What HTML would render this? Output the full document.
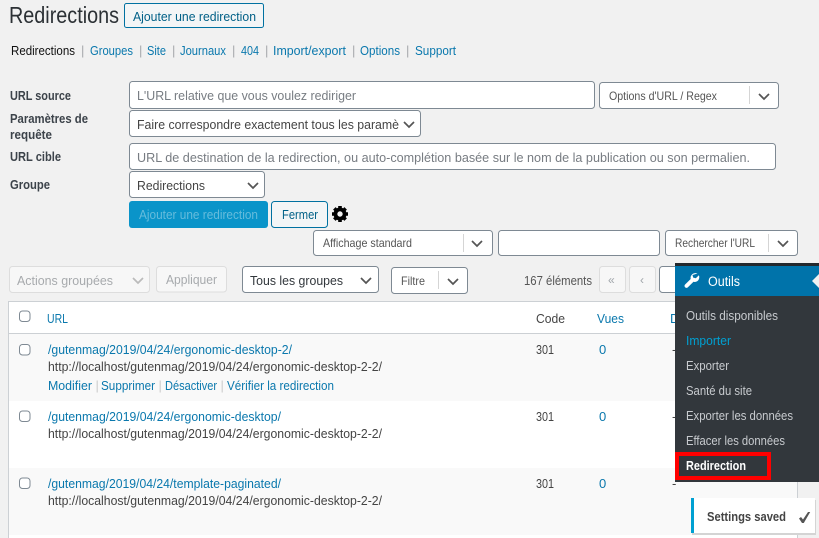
<!DOCTYPE html>
<html lang="fr"><head><meta charset="utf-8"><title>Redirections</title>
<style>
html,body{margin:0;padding:0;width:819px;height:538px;overflow:hidden;background:#f1f1f1}
svg{display:block}
text{font-family:"Liberation Sans",sans-serif;font-size:13px;fill:#444}
.l{fill:#0a78ad}
.b{font-weight:bold;font-size:12.5px;fill:#3c434a}
.p{fill:#777c82}
.s{fill:#555;font-size:12px}
.sep{fill:#a7aaad}
.m{fill:#c8cbcf;font-size:13px}
.f{fill:#fff;stroke:#7e8993}
.ch{fill:none;stroke:#555;stroke-width:1.7}
.cb{fill:#fff;stroke:#7e8993}
</style></head><body>
<svg width="819" height="538" viewBox="0 0 819 538" xmlns="http://www.w3.org/2000/svg">
<rect width="819" height="538" fill="#f1f1f1"/>

<text x="9" y="23" textLength="110" lengthAdjust="spacingAndGlyphs" style="font-size:23px;fill:#2c3135">Redirections</text>
<rect x="124.500" y="3.500" width="139" height="24" rx="2" fill="#f3f5f6" stroke="#0071a1"/>
<text x="133" y="21" textLength="123" lengthAdjust="spacingAndGlyphs" style="fill:#016087">Ajouter une redirection</text>

<text x="11" y="55" textLength="64" lengthAdjust="spacingAndGlyphs" style="fill:#111">Redirections</text>
<text x="81" y="55" class="sep">|</text>
<text x="90" y="55" textLength="43" lengthAdjust="spacingAndGlyphs" class="l">Groupes</text>
<text x="139" y="55" class="sep">|</text>
<text x="147" y="55" textLength="19" lengthAdjust="spacingAndGlyphs" class="l">Site</text>
<text x="172" y="55" class="sep">|</text>
<text x="180" y="55" textLength="46" lengthAdjust="spacingAndGlyphs" class="l">Journaux</text>
<text x="232" y="55" class="sep">|</text>
<text x="241" y="55" textLength="18" lengthAdjust="spacingAndGlyphs" class="l">404</text>
<text x="265" y="55" class="sep">|</text>
<text x="273" y="55" textLength="73" lengthAdjust="spacingAndGlyphs" class="l">Import/export</text>
<text x="352" y="55" class="sep">|</text>
<text x="360" y="55" textLength="40" lengthAdjust="spacingAndGlyphs" class="l">Options</text>
<text x="406" y="55" class="sep">|</text>
<text x="415" y="55" textLength="41" lengthAdjust="spacingAndGlyphs" class="l">Support</text>

<text x="10" y="100" textLength="61" lengthAdjust="spacingAndGlyphs" class="b">URL source</text>
<text x="10" y="123" textLength="78" lengthAdjust="spacingAndGlyphs" class="b">Paramètres de</text>
<text x="10" y="139" textLength="42" lengthAdjust="spacingAndGlyphs" class="b">requête</text>
<text x="10" y="161" textLength="51" lengthAdjust="spacingAndGlyphs" class="b">URL cible</text>
<text x="10" y="189" textLength="40" lengthAdjust="spacingAndGlyphs" class="b">Groupe</text>

<rect x="129.500" y="81.500" width="465" height="27" rx="3" class="f"/>
<text x="137" y="100" textLength="219" lengthAdjust="spacingAndGlyphs" class="p">L'URL relative que vous voulez rediriger</text>

<rect x="599.500" y="82.500" width="179" height="26" rx="3" class="f"/>
<text x="609" y="100" textLength="108" lengthAdjust="spacingAndGlyphs" class="s">Options d'URL / Regex</text>
<path d="M749.500 86v18" stroke="#d5d5d5"/>
<path d="M759 94l5 5 5-5" class="ch"/>

<rect x="129.500" y="110.500" width="291" height="26" rx="3" class="f"/>
<text x="137" y="129" textLength="262" lengthAdjust="spacingAndGlyphs">Faire correspondre exactement tous les paramè</text>
<path d="M404 122l5 5 5-5" class="ch"/>

<rect x="129.500" y="143.500" width="646" height="26" rx="3" class="f"/>
<text x="137" y="162" textLength="613" lengthAdjust="spacingAndGlyphs" class="p">URL de destination de la redirection, ou auto-complétion basée sur le nom de la publication ou son permalien.</text>

<rect x="129.500" y="171.500" width="135" height="26" rx="3" class="f"/>
<text x="137" y="190" textLength="68" lengthAdjust="spacingAndGlyphs">Redirections</text>
<path d="M248 183l5 5 5-5" class="ch"/>

<rect x="129" y="201" width="139" height="27" rx="3" fill="#0a94c9"/>
<text x="139" y="219" textLength="119" lengthAdjust="spacingAndGlyphs" style="fill:#66bcdc">Ajouter une redirection</text>
<rect x="271.500" y="201.500" width="56" height="26" rx="3" fill="#f3f5f6" stroke="#0071a1"/>
<text x="282" y="219" textLength="36" lengthAdjust="spacingAndGlyphs" style="fill:#016087">Fermer</text>
<g transform="translate(340 214)" fill="#000">
<circle r="4.600" fill="none" stroke="#000" stroke-width="3.800"/>
<path d="M-1.800-8h3.600v3h-3.600zM-1.800 5h3.600v3h-3.600zM-8-1.800h3v3.600h-3zM5-1.800h3v3.600h-3z"/>
<path d="M-1.800-8h3.600v3h-3.600zM-1.800 5h3.600v3h-3.600zM-8-1.800h3v3.600h-3zM5-1.800h3v3.600h-3z" transform="rotate(45)"/>
</g>

<rect x="313.500" y="230.500" width="179" height="25" rx="3" class="f"/>
<text x="323" y="247" textLength="89" lengthAdjust="spacingAndGlyphs" class="s">Affichage standard</text>
<path d="M463.500 234v18" stroke="#d5d5d5"/>
<path d="M472 241l5 5 5-5" class="ch"/>
<rect x="498.500" y="230.500" width="161" height="25" rx="3" class="f"/>
<rect x="665.500" y="230.500" width="132" height="25" rx="3" class="f"/>
<text x="675" y="247" textLength="80" lengthAdjust="spacingAndGlyphs" class="s">Rechercher l'URL</text>
<path d="M768.500 234v18" stroke="#d5d5d5"/>
<path d="M778 241l5 5 5-5" class="ch"/>

<rect x="9.500" y="266.500" width="140" height="26" rx="3" fill="#f7f7f7" stroke="#ddd"/>
<text x="17" y="285" textLength="96" lengthAdjust="spacingAndGlyphs" style="fill:#a7aaad">Actions groupées</text>
<path d="M133 278l5 5 5-5" class="ch" style="stroke:#bbb"/>
<rect x="156.500" y="266.500" width="70" height="25.500" rx="3" fill="#f7f7f7" stroke="#ddd"/>
<text x="166" y="284" textLength="51" lengthAdjust="spacingAndGlyphs" style="fill:#a7aaad">Appliquer</text>
<rect x="242.500" y="266.500" width="136" height="26" rx="3" class="f"/>
<text x="250" y="285" textLength="93" lengthAdjust="spacingAndGlyphs" style="fill:#32373c">Tous les groupes</text>
<path d="M361 278l5 5 5-5" class="ch"/>
<rect x="391.500" y="267.500" width="76" height="26" rx="3" class="f"/>
<text x="401" y="285" textLength="24" lengthAdjust="spacingAndGlyphs" class="s">Filtre</text>
<path d="M438.500 271v18" stroke="#d5d5d5"/>
<path d="M448 279l5 5 5-5" class="ch"/>

<text x="524" y="285" textLength="68" lengthAdjust="spacingAndGlyphs" style="fill:#555">167 éléments</text>
<rect x="599.500" y="266.500" width="26" height="26" rx="3" fill="#f7f7f7" stroke="#ddd"/>
<text x="608" y="284" style="fill:#a0a5aa;font-size:12px">«</text>
<rect x="629.500" y="266.500" width="26" height="26" rx="3" fill="#f7f7f7" stroke="#ddd"/>
<text x="640" y="284" style="fill:#a0a5aa;font-size:12px">‹</text>
<rect x="659.500" y="266.500" width="40" height="26" rx="3" class="f"/>

<!-- table -->
<rect x="8.500" y="301.500" width="789" height="245" fill="#fff" stroke="#ccd0d4"/>
<path d="M9 333.500h788" stroke="#ccd0d4"/>
<rect x="9" y="334" width="788" height="67" fill="#f9f9f9"/>
<rect x="9" y="468" width="788" height="67" fill="#f9f9f9"/>

<rect x="19.500" y="311" width="10.500" height="10.500" rx="3" class="cb"/>
<text x="47" y="323" textLength="21" lengthAdjust="spacingAndGlyphs" class="l">URL</text>
<text x="536" y="323" textLength="29" lengthAdjust="spacingAndGlyphs">Code</text>
<text x="597" y="323" textLength="27" lengthAdjust="spacingAndGlyphs" class="l">Vues</text>
<text x="670" y="323" class="l">D</text>

<rect x="19.500" y="344.500" width="10.500" height="10.500" rx="3" class="cb"/>
<text x="48" y="354" textLength="244" lengthAdjust="spacingAndGlyphs" class="l">/gutenmag/2019/04/24/ergonomic-desktop-2/</text>
<text x="48" y="371" textLength="334" lengthAdjust="spacingAndGlyphs">http://localhost/gutenmag/2019/04/24/ergonomic-desktop-2-2/</text>
<text x="48" y="390" textLength="44" lengthAdjust="spacingAndGlyphs" class="l">Modifier</text>
<text x="95.500" y="390" style="fill:#ccc">|</text>
<text x="101" y="390" textLength="54" lengthAdjust="spacingAndGlyphs" class="l">Supprimer</text>
<text x="158.500" y="390" style="fill:#ccc">|</text>
<text x="165" y="390" textLength="52" lengthAdjust="spacingAndGlyphs" class="l">Désactiver</text>
<text x="220.500" y="390" style="fill:#ccc">|</text>
<text x="227" y="390" textLength="107" lengthAdjust="spacingAndGlyphs" class="l">Vérifier la redirection</text>
<text x="536" y="354" textLength="18" lengthAdjust="spacingAndGlyphs">301</text>
<text x="599" y="354" class="l">0</text>
<text x="672" y="354">-</text>

<rect x="19.500" y="411" width="10.500" height="10.500" rx="3" class="cb"/>
<text x="48" y="421" textLength="233" lengthAdjust="spacingAndGlyphs" class="l">/gutenmag/2019/04/24/ergonomic-desktop/</text>
<text x="48" y="438" textLength="334" lengthAdjust="spacingAndGlyphs">http://localhost/gutenmag/2019/04/24/ergonomic-desktop-2-2/</text>
<text x="536" y="421" textLength="18" lengthAdjust="spacingAndGlyphs">301</text>
<text x="599" y="421" class="l">0</text>
<text x="672" y="421">-</text>

<rect x="19.500" y="478" width="10.500" height="10.500" rx="3" class="cb"/>
<text x="48" y="488" textLength="233" lengthAdjust="spacingAndGlyphs" class="l">/gutenmag/2019/04/24/template-paginated/</text>
<text x="48" y="505" textLength="334" lengthAdjust="spacingAndGlyphs">http://localhost/gutenmag/2019/04/24/ergonomic-desktop-2-2/</text>
<text x="536" y="488" textLength="18" lengthAdjust="spacingAndGlyphs">301</text>
<text x="599" y="488" class="l">0</text>
<text x="672" y="488">-</text>

<!-- menu -->
<rect x="675" y="263" width="144" height="3" fill="#23282d"/>
<rect x="675" y="266" width="144" height="30" fill="#0073aa"/>
<rect x="675" y="296" width="144" height="186" fill="#32373c"/>
<path d="M697.500 273.500c-2-.8-4.300-.3-5.700 1.200-1.100 1.200-1.500 2.800-1.100 4.300l-5.600 5.500c-.8.800-.8 2 0 2.800.8.800 2 .8 2.800 0l5.600-5.500c1.500.4 3.200 0 4.300-1.100 1.400-1.400 1.900-3.600 1.100-5.500l-3.100 3-2.600-.6-.7-2.600z" fill="#fff"/>
<text x="708" y="286" textLength="32" lengthAdjust="spacingAndGlyphs" style="fill:#fff;font-size:13.500px">Outils</text>
<path d="M819 274l-7 7 7 7z" fill="#f1f1f1"/>
<text x="686" y="320" textLength="92" lengthAdjust="spacingAndGlyphs" class="m">Outils disponibles</text>
<text x="686" y="345" textLength="45" lengthAdjust="spacingAndGlyphs" class="m" style="fill:#00a0d2">Importer</text>
<text x="686" y="370" textLength="43" lengthAdjust="spacingAndGlyphs" class="m">Exporter</text>
<text x="686" y="395" textLength="66" lengthAdjust="spacingAndGlyphs" class="m">Santé du site</text>
<text x="686" y="420" textLength="107" lengthAdjust="spacingAndGlyphs" class="m">Exporter les données</text>
<text x="686" y="445" textLength="99" lengthAdjust="spacingAndGlyphs" class="m">Effacer les données</text>
<text x="686" y="470" textLength="60" lengthAdjust="spacingAndGlyphs" style="fill:#fff;font-weight:bold;font-size:12.500px">Redirection</text>
<rect x="677" y="454" width="92" height="24" fill="none" stroke="#f00" stroke-width="4"/>

<!-- toast -->
<rect x="692" y="500" width="124" height="35" fill="#d4d4d4"/>
<rect x="691" y="498" width="124" height="35" fill="#fff"/>
<rect x="691" y="498" width="3" height="35" fill="#00a0d2"/>
<text x="707" y="521" textLength="79" lengthAdjust="spacingAndGlyphs" class="b" style="fill:#444">Settings saved</text>
<path d="M799 518.500l2-1.500 2 2.500 5-7.500h2.200l-6.400 11h-1.800z" fill="#555"/>
</svg>
</body></html>
